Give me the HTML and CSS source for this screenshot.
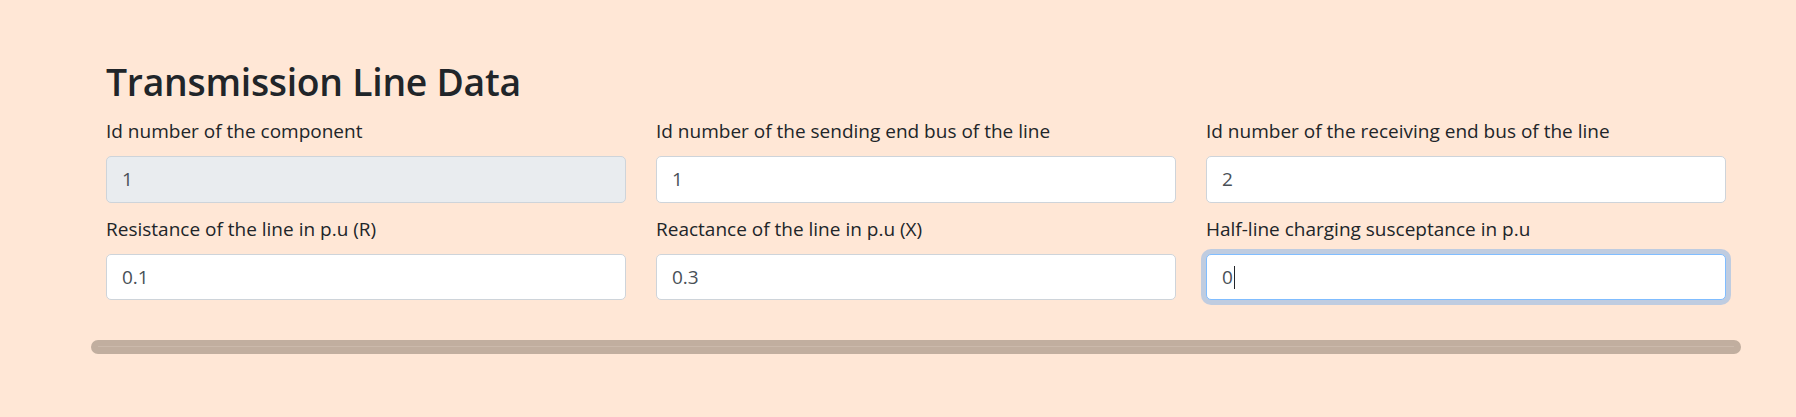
FILE: index.html
```html
<!DOCTYPE html>
<html lang="en">
<head>
<meta charset="utf-8">
<title>Transmission Line Data</title>
<link rel="stylesheet" href="styles.css">
</head>
<body>
<div class="page">
  <div class="panel">
    <h2 class="title">Transmission Line Data</h2>
    <div class="grid">
      <div class="field">
        <label class="label">Id number of the component</label>
        <input class="control disabled" type="text" value="1" disabled>
      </div>
      <div class="field">
        <label class="label">Id number of the sending end bus of the line</label>
        <input class="control" type="text" value="1">
      </div>
      <div class="field">
        <label class="label">Id number of the receiving end bus of the line</label>
        <input class="control" type="text" value="2">
      </div>
      <div class="field">
        <label class="label">Resistance of the line in p.u (R)</label>
        <input class="control short" type="text" value="0.1">
      </div>
      <div class="field">
        <label class="label">Reactance of the line in p.u (X)</label>
        <input class="control short" type="text" value="0.3">
      </div>
      <div class="field">
        <label class="label">Half-line charging susceptance in p.u</label>
        <div class="focus-wrap">
          <input class="control short focused" type="text" value="0">
          <span class="caret"></span>
        </div>
      </div>
    </div>
  </div>
  <div class="scrollbar"><div class="thumb"></div></div>
</div>
</body>
</html>
```
FILE: styles.css
```css
html, body {
  margin: 0;
  padding: 0;
  background: #ffe7d6;
}
body {
  font-family: "Open Sans", "Noto Sans", sans-serif;
  color: #212529;
  width: 1796px;
  height: 417px;
  overflow: hidden;
}
.page {
  padding: 58px 55px 0 91px;
}
.panel {
  padding: 0 15px;
}
.title {
  margin: 0 0 9.5px 0;
  font-size: 37.3px;
  line-height: 48px;
  font-weight: 600;
  letter-spacing: -0.25px;
  color: #212529;
}
.grid {
  display: grid;
  grid-template-columns: 1fr 1fr 1fr;
  column-gap: 30px;
  row-gap: 11.5px;
}
.field {
  display: flex;
  flex-direction: column;
}
.label {
  font-size: 19px;
  line-height: 30px;
  margin-bottom: 10px;
  color: #212529;
  white-space: nowrap;
}
.field:nth-child(n+4) .label {
  margin-bottom: 9.5px;
}
.control {
  box-sizing: border-box;
  width: 100%;
  height: 47px;
  margin: 0;
  padding: 0 15px;
  font-family: "Open Sans", "Noto Sans", sans-serif;
  font-size: 19px;
  color: #495057;
  background: #ffffff;
  border: 1px solid #ced4da;
  border-radius: 5px;
  outline: none;
}
.control.short {
  height: 46px;
}
.control.disabled {
  background: #e9ecef;
  color: #495057;
  opacity: 1;
  -webkit-text-fill-color: #495057;
}
.control.focused {
  border-color: #80bdff;
  box-shadow: 0 0 0 5px rgba(0, 123, 255, 0.25);
}
.focus-wrap {
  position: relative;
}
.caret {
  position: absolute;
  left: 28px;
  top: 12px;
  width: 1px;
  height: 23px;
  background: #212529;
}
.scrollbar {
  margin-top: 40.5px;
  height: 14px;
}
.thumb {
  position: relative;
  height: 14px;
  border-radius: 7px;
  background: #c1ae9f;
}
.thumb::after {
  content: "";
  position: absolute;
  left: 7px;
  right: 7px;
  top: 6px;
  height: 1px;
  background: #cbb9ab;
}
```
